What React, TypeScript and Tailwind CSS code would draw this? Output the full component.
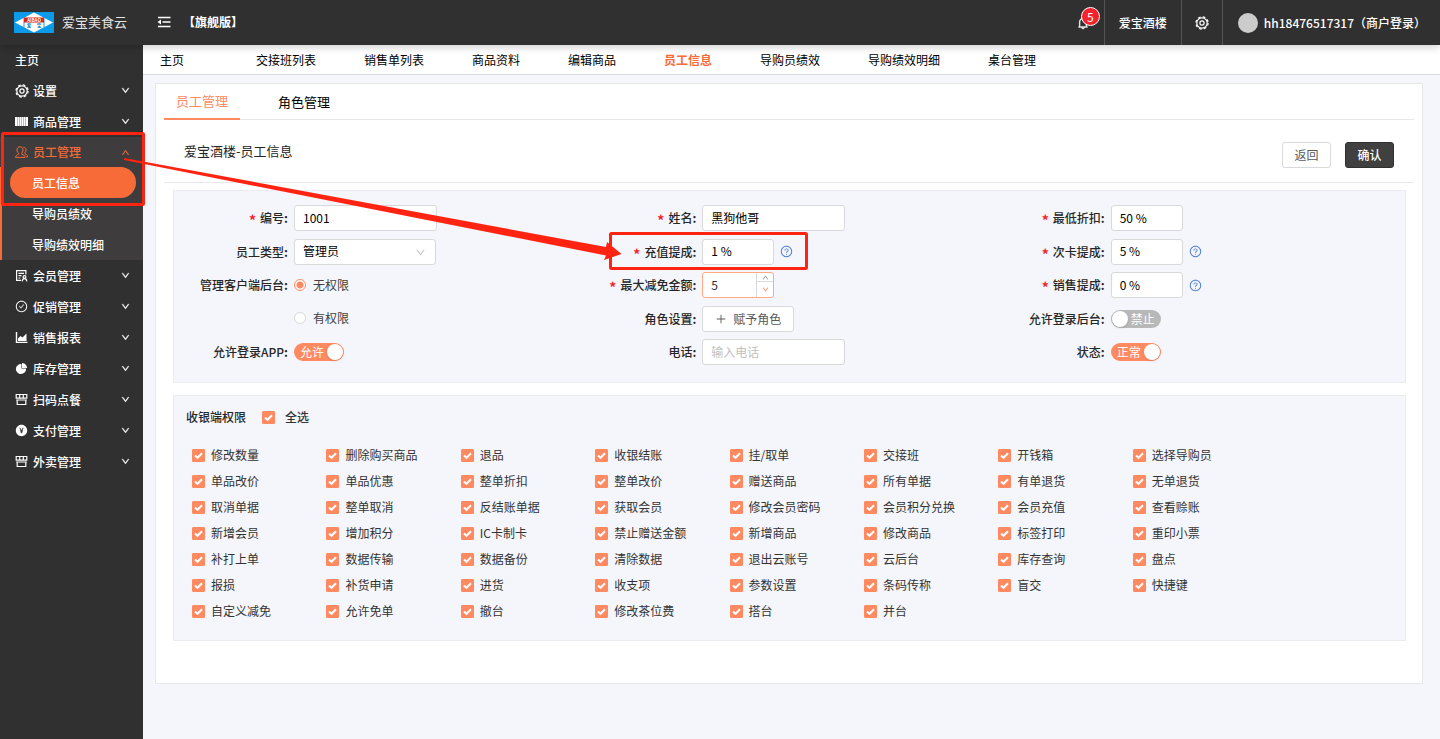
import { ReactNode, useState } from "react";
import { IconType } from "react-icons";
import {
  AiFillPayCircle,
  AiFillPieChart,
  AiOutlineBell,
  AiOutlineCheckCircle,
  AiOutlineDown,
  AiOutlinePlus,
  AiOutlineQuestionCircle,
  AiOutlineUp,
} from "react-icons/ai";

const MenuFoldIcon = () => (
  <svg viewBox="0 0 14 12" width="14" height="12" fill="none" stroke="#fff" strokeWidth="1.500">
    <path d="M1 1.500h12.500M5.500 6h8M1 10.500h12.500" />
    <path d="M.5 6 4 3.500v5Z" fill="#fff" stroke="none" />
  </svg>
);

const GearIcon = () => (
  <svg viewBox="0 0 14 14" width="14" height="14" fill="none" stroke="currentColor">
    <circle cx="7" cy="7" r="5.200" strokeWidth="1.200" />
    <circle cx="7" cy="7" r="6.100" strokeWidth="1.200" strokeDasharray="2.700 2.090" />
    <circle cx="7" cy="7" r="2.100" strokeWidth="1.200" />
  </svg>
);

const BarcodeIcon = () => (
  <svg viewBox="0 0 13 9" width="13" height="9" className="fill-current">
    <path d="M0 0h2v9H0zM2.500 0h1.500v9H2.500zM4.500 0h1.500v9H4.500zM6.500 0h2v9H6.500zM9 0h1.500v9H9zM11 0h2v9h-2z" />
    <path d="M0 0h13v9H0z" opacity=".35" />
  </svg>
);

const StaffIcon = () => (
  <svg viewBox="0 0 13 13" width="13" height="13" fill="none" stroke="currentColor" strokeWidth="1">
    <path d="M5 .8c2 0 3 1.400 3 3.200 0 1.500-.6 2.600-1.300 3.200v1l2.600 1.300c.6.3.7.8.7 1.900H.6c0-1.100.2-1.600.8-1.900l2.200-1.300v-1C2.700 6.600 2 5.500 2 4 2 2.200 3 .8 5 .8Z" />
    <path d="M8.300 1.200c1.700 0 2.700 1.100 2.700 2.700 0 1.200-.5 2.100-1.100 2.700v1l1.700 1c.7.4.9.800.9 2.300H11" />
  </svg>
);

const MemberIcon = () => (
  <svg viewBox="0 0 13 13" width="13" height="13" fill="none" stroke="currentColor" strokeWidth="1.200">
    <path d="M6 11.400H1.600V1.600h9.300v4M3.500 4.300h5.500M3.500 6.700h3M3.500 9h2" />
    <circle cx="9.500" cy="8" r="1.400" />
    <path d="M7.200 12.400c.2-1.800 1-2.700 2.300-2.700s2.100.9 2.300 2.700" />
  </svg>
);

const ReportIcon = () => (
  <svg viewBox="0 0 13 13" width="13" height="13" fill="none" stroke="currentColor" strokeWidth="1.400">
    <path d="M1.500 1v10.400H12.500" />
    <path d="M3 10V7.500L5.500 5l2 1.500L11.500 2.500V10Z" fill="currentColor" stroke="none" />
  </svg>
);

const ShopIcon = () => (
  <svg viewBox="0 0 13 13" width="13" height="13" fill="none" stroke="currentColor" strokeWidth="1.200">
    <path d="M1.200 1.500h10.600v3.700H1.200ZM4.700 1.500v3.700M8.300 1.500v3.700M2.200 7v4.500h8.600V7M1.200 7h10.600" />
  </svg>
);

type MenuItem = { label: string; icon: IconType | (() => ReactNode) };

const menuTop: MenuItem[] = [
  { label: "设置", icon: GearIcon },
  { label: "商品管理", icon: BarcodeIcon },
];

const menuBottom: MenuItem[] = [
  { label: "会员管理", icon: MemberIcon },
  { label: "促销管理", icon: AiOutlineCheckCircle },
  { label: "销售报表", icon: ReportIcon },
  { label: "库存管理", icon: AiFillPieChart },
  { label: "扫码点餐", icon: ShopIcon },
  { label: "支付管理", icon: AiFillPayCircle },
  { label: "外卖管理", icon: ShopIcon },
];

const pageTabs = ["主页", "交接班列表", "销售单列表", "商品资料", "编辑商品", "员工信息", "导购员绩效", "导购绩效明细", "桌台管理"];

const permissions = [
  "修改数量", "删除购买商品", "退品", "收银结账", "挂/取单", "交接班", "开钱箱", "选择导购员",
  "单品改价", "单品优惠", "整单折扣", "整单改价", "赠送商品", "所有单据", "有单退货", "无单退货",
  "取消单据", "整单取消", "反结账单据", "获取会员", "修改会员密码", "会员积分兑换", "会员充值", "查看赊账",
  "新增会员", "增加积分", "IC卡制卡", "禁止赠送金额", "新增商品", "修改商品", "标签打印", "重印小票",
  "补打上单", "数据传输", "数据备份", "清除数据", "退出云账号", "云后台", "库存查询", "盘点",
  "报损", "补货申请", "进货", "收支项", "参数设置", "条码传称", "盲交", "快捷键",
  "自定义减免", "允许免单", "撤台", "修改茶位费", "搭台", "并台",
];

const inputClass = "h-[26px] rounded-[3px] border border-[#d9d9d9] bg-white px-2 pb-0.5 text-xs text-black outline-none placeholder:text-[#bfbfbf]";

const Logo = () => (
  <svg viewBox="0 0 40 21" width="40" height="21" role="img" aria-label="AIBAO">
    <rect width="40" height="21" fill="#0c9be9" />
    <path d="M20 .5 39 10.500 20 20.500 1 10.500Z" fill="#fff" />
    <path d="M10 5.700v9.600M30 5.700v9.600" stroke="#0c9be9" strokeWidth="1" />
    <rect x="10" y="5.500" width="20" height="5" fill="#d9261c" />
    <text x="20" y="9.700" fontSize="4.500" fontWeight="700" fill="#fff" textAnchor="middle">AIBAO</text>
    <text x="15" y="15" fontSize="4.500" fontWeight="700" fill="#0c7fc4" textAnchor="middle">爱</text>
    <text x="25" y="15" fontSize="4.500" fontWeight="700" fill="#0c7fc4" textAnchor="middle">宝</text>
  </svg>
);

const Header = () => (
  <header className="relative z-10 flex h-[45px] items-center bg-[#303030] pb-px text-white shadow-[0_2px_8px_rgba(0,0,0,0.2)]">
    <div className="flex w-[143px] items-center gap-2 pl-3.5">
      <Logo />
      <span className="text-[13px] text-[#e4e4e4]">爱宝美食云</span>
    </div>
    <button aria-label="收起菜单" className="ml-3.5">
      <MenuFoldIcon />
    </button>
    <span className="ml-3 text-xs font-bold">【旗舰版】</span>
    <div className="-mb-px ml-auto flex h-[45px] items-stretch text-xs font-medium">
      <button aria-label="通知" className="relative px-3.5">
        <AiOutlineBell size={14} className="stroke-[20]" />
        <span className="absolute top-[7px] right-[4px] flex size-[19px] items-center justify-center rounded-full border border-white bg-[#f5222d] text-xs font-normal">5</span>
      </button>
      <span className="flex items-center border-l border-[#555] px-3.5">爱宝酒楼</span>
      <button aria-label="设置" className="border-x border-[#555] px-[13px]">
        <GearIcon />
      </button>
      <div className="flex items-center gap-1.5 pr-3.5 pl-[15px]">
        <span className="size-5 rounded-full bg-[#ccc]" />
        <span>hh18476517317（商户登录）</span>
      </div>
    </div>
  </header>
);

const MenuRow = ({ label, icon: Icon }: MenuItem) => (
  <li>
    <button className="flex h-[31px] w-full items-center pr-[13px] pl-[15px]">
      <span className="flex w-[18px] items-center text-[13px]"><Icon /></span>
      {label}
      <AiOutlineDown size={9} className="ml-auto stroke-[60]" />
    </button>
  </li>
);

const Sidebar = () => (
  <nav className="w-[143px] shrink-0 bg-[#303030] text-xs font-medium text-white">
    <ul>
      <li>
        <a href="#" className="flex h-[30px] items-center pl-[15px]">主页</a>
      </li>
      {menuTop.map((item) => <MenuRow key={item.label} {...item} />)}
      <li className="bg-[#3e3c3d]">
        <button className="flex h-[30px] w-full items-center pr-[13px] pl-[15px] text-[#f76b39]">
          <span className="flex w-[18px] items-center"><StaffIcon /></span>
          员工管理
          <AiOutlineUp size={9} className="ml-auto stroke-[40]" />
        </button>
        <ul className="border-l-2 border-[#f76b39]">
          <li className="pr-[7px] pl-2">
            <a href="#" className="flex h-[31px] items-center rounded-full bg-[#f76b39] pl-[22px]">员工信息</a>
          </li>
          <li>
            <a href="#" className="flex h-[31px] items-center pl-[30px]">导购员绩效</a>
          </li>
          <li>
            <a href="#" className="flex h-[31px] items-center pl-[30px]">导购绩效明细</a>
          </li>
        </ul>
      </li>
      {menuBottom.map((item) => <MenuRow key={item.label} {...item} />)}
    </ul>
  </nav>
);

const Field = ({ label, required, htmlFor, children }: { label: string; required?: boolean; htmlFor?: string; children: ReactNode }) => (
  <div className="flex h-[26px] items-center">
    <label htmlFor={htmlFor} className="flex w-[117px] shrink-0 items-center justify-end pr-1.5 font-medium whitespace-nowrap text-[#262626]">
      {required && <span className="mr-1 pt-1 text-sm leading-none font-bold text-[#f5222d]">*</span>}
      <span>{label}<b>:</b></span>
    </label>
    {children}
  </div>
);

const TextField = ({ id, label, value, required, placeholder }: { id: string; label: string; value?: string; required?: boolean; placeholder?: string }) => (
  <Field label={label} required={required} htmlFor={id}>
    <input id={id} defaultValue={value} placeholder={placeholder} className={`${inputClass} w-[143px]`} />
  </Field>
);

const PercentField = ({ id, label, value, help }: { id: string; label: string; value: string; help?: boolean }) => (
  <Field label={label} required htmlFor={id}>
    <input id={id} defaultValue={value} className={`${inputClass} w-[72px]`} />
    {help && <AiOutlineQuestionCircle size={13} className="ml-1.5 text-[#4a7bd0]" />}
  </Field>
);

const Switch = ({ label, on, off, checked }: { label: string; on: string; off: string; checked: boolean }) => {
  const [value, setValue] = useState(checked);

  return (
    <button
      role="switch"
      aria-label={label}
      aria-checked={value}
      onClick={() => setValue(!value)}
      className={`flex h-[18px] w-[50px] items-center justify-between rounded-full text-xs text-white ${value ? "bg-[#ff8a61] pr-px pl-1.5" : "flex-row-reverse bg-[#b8b8b8] pr-1.5 pl-px"}`}
    >
      <span>{value ? on : off}</span>
      <span className="size-4 rounded-full bg-white shadow-sm" />
    </button>
  );
};

const Radio = ({ label, checked }: { label: string; checked?: boolean }) => (
  <label className="flex items-center gap-[7px] text-[#404040]">
    <input
      type="radio"
      name="backend"
      defaultChecked={checked}
      className="size-3 appearance-none rounded-full border border-[#d9d9d9] bg-white checked:border-[#ff8a61] checked:bg-[radial-gradient(circle,#ff8a61_3px,#fff_4px)]"
    />
    {label}
  </label>
);

const Checkbox = ({ label, bold }: { label: string; bold?: boolean }) => (
  <label className={`flex items-center text-[#333] ${bold ? "gap-2.5 font-medium" : "gap-1.5"}`}>
    <span className="relative flex size-[13px]">
      <input type="checkbox" defaultChecked className="peer size-[13px] appearance-none rounded-[1px] border border-[#d9d9d9] bg-white checked:border-[#ff8a61] checked:bg-[#ff8a61]" />
      <svg viewBox="0 0 13 13" className="pointer-events-none absolute inset-0 hidden peer-checked:block" fill="none" stroke="#fff" strokeWidth="2">
        <path d="m3 6.500 2.500 2.300L10 4.200" />
      </svg>
    </span>
    {label}
  </label>
);

const StaffForm = () => (
  <section className="mr-2 ml-[9px] flex justify-between border border-[#ececf0] bg-[#f5f6fb] px-[3px] pt-3.5 pb-[17px]">
    <div className="flex h-[160px] flex-1 flex-col justify-between">
      <TextField id="code" label="编号" value="1001" required />
      <Field label="员工类型" htmlFor="type">
        <div className="relative">
          <select id="type" className={`${inputClass} w-[142px] appearance-none`}>
            <option>管理员</option>
          </select>
          <AiOutlineDown size={11} className="pointer-events-none absolute top-2 right-2.5 text-[#bfbfbf]" />
        </div>
      </Field>
      <Field label="管理客户端后台">
        <Radio label="无权限" checked />
      </Field>
      <div className="flex h-[26px] items-center pb-0.5 pl-[117px]">
        <Radio label="有权限" />
      </div>
      <Field label="允许登录APP">
        <Switch label="允许登录APP" on="允许" off="禁止" checked />
      </Field>
    </div>
    <div className="flex h-[160px] flex-1 flex-col justify-between">
      <TextField id="name" label="姓名" value="黑狗他哥" required />
      <PercentField id="recharge" label="充值提成" value="1 %" help />
      <Field label="最大减免金额" required htmlFor="reduce">
        <div className="flex h-[26px] w-[72px] overflow-hidden rounded-[3px] border border-[#ffa985] bg-white">
          <input id="reduce" defaultValue="5" className="w-0 flex-1 px-2 text-xs text-[#333] outline-none" />
          <div className="flex w-[17px] flex-col border-l border-[#d9d9d9]">
            <button aria-label="增加" className="flex h-[9px] items-center justify-center border-b border-[#d9d9d9] text-[#999]"><AiOutlineUp size={7} className="stroke-[40]" /></button>
            <button aria-label="减少" className="flex flex-1 items-center justify-center text-[#ff8a61]"><AiOutlineDown size={7} className="stroke-[40]" /></button>
          </div>
        </div>
      </Field>
      <Field label="角色设置">
        <button className="flex h-[26px] w-[92px] items-center justify-center gap-1.5 rounded-[3px] border border-[#d9d9d9] bg-white text-[#595959]">
          <AiOutlinePlus size={12} />赋予角色
        </button>
      </Field>
      <TextField id="phone" label="电话" placeholder="输入电话" />
    </div>
    <div className="flex h-[160px] flex-1 flex-col justify-between">
      <PercentField id="discount" label="最低折扣" value="50 %" />
      <PercentField id="card" label="次卡提成" value="5 %" help />
      <PercentField id="sale" label="销售提成" value="0 %" help />
      <Field label="允许登录后台">
        <Switch label="允许登录后台" on="允许" off="禁止" checked={false} />
      </Field>
      <Field label="状态">
        <Switch label="状态" on="正常" off="停用" checked />
      </Field>
    </div>
  </section>
);

const Permissions = () => (
  <section className="mt-3 mr-2 ml-[9px] border border-[#ececf0] bg-[#f5f6fb] pt-[11px] pr-[138px] pb-4 pl-[18px]">
    <div className="-ml-1.5 flex h-5 items-center gap-4">
      <h2 className="font-medium text-[#262626]">收银端权限</h2>
      <Checkbox label="全选" bold />
    </div>
    <div className="mt-[15px] grid auto-rows-[26px] grid-cols-8 whitespace-nowrap">
      {permissions.map((item) => <Checkbox key={item} label={item} />)}
    </div>
  </section>
);

// Red marks drawn over the page to point from the menu entry to the field
const Annotations = () => (
  <svg className="pointer-events-none absolute top-0 left-0 z-20" width="820" height="280" fill="none" stroke="#ff2312" strokeWidth="3">
    <rect x="2.500" y="133.500" width="141" height="71" rx="1" />
    <rect x="610.500" y="233.500" width="196" height="35" rx="1" />
    <path d="M124 158 606 247l1-5 14.500 12-17.500 6 2-4.500L124 160Z" fill="#ff2312" stroke="none" />
  </svg>
);

const App = () => (
  <div className="relative flex min-h-screen flex-col bg-[#f5f6fb] font-['Noto_Sans_CJK_SC',sans-serif] text-xs">
    <Header />
    <div className="flex flex-1">
      <Sidebar />
      <main className="min-w-0 flex-1">
        <nav className="flex h-[30px] items-center gap-12 border-b border-[#d9d9d9] bg-white pl-[17px] whitespace-nowrap text-black">
          {pageTabs.map((tab) => (
            <a key={tab} href="#" className={`min-w-12 ${tab === "员工信息" ? "font-bold text-[#f76b39]" : ""}`}>{tab}</a>
          ))}
        </nav>
        <div className="mt-2 mr-[17px] ml-3 border border-[#e8e8e8] bg-white px-2 pb-[42px]">
          <div className="flex h-9 gap-[26px] border-b border-[#e8e8e8] text-[13px]">
            <button className="-mb-px border-b-2 border-[#ff8a61] px-3 text-[#ff8a61]">员工管理</button>
            <button className="px-3 text-black">角色管理</button>
          </div>
          <div className="mb-[7px] flex h-[63px] items-center justify-between border-b border-[#e8e8e8] pr-5 pl-5">
            <h1 className="text-[13px] text-[#262626]">爱宝酒楼-员工信息</h1>
            <div className="mt-2 flex gap-3.5">
              <button className="h-[26px] w-[49px] rounded-[3px] border border-[#d9d9d9] bg-white text-[#595959]">返回</button>
              <button className="h-[26px] w-[49px] rounded-[3px] border border-[#303030] bg-[#404040] font-medium text-white">确认</button>
            </div>
          </div>
          <StaffForm />
          <Permissions />
        </div>
      </main>
    </div>
    <Annotations />
  </div>
);

export default App;
